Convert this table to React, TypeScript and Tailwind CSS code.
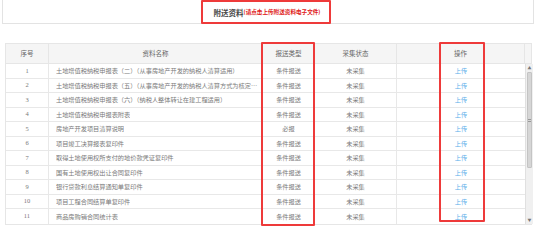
const rows = [
  { name: '土地增值税纳税申报表（二）（从事房地产开发的纳税人清算适用）', type: '条件报送' },
  { name: '土地增值税纳税申报表（五）（从事房地产开发的纳税人清算方式为核定征收适用）', type: '条件报送' },
  { name: '土地增值税纳税申报表（六）（纳税人整体转让在建工程适用）', type: '条件报送' },
  { name: '土地增值税纳税申报表附表', type: '条件报送' },
  { name: '房地产开发项目清算说明', type: '必报' },
  { name: '项目竣工决算报表复印件', type: '条件报送' },
  { name: '取得土地使用权所支付的地价款凭证复印件', type: '条件报送' },
  { name: '国有土地使用权出让合同复印件', type: '条件报送' },
  { name: '银行贷款利息结算通知单复印件', type: '条件报送' },
  { name: '项目工程合同结算单复印件', type: '条件报送' },
  { name: '商品房购销合同统计表', type: '条件报送' },
];

const font = { fontFamily: '"Noto Sans CJK SC", "Liberation Sans", sans-serif' };

export default function App() {
  return (
    <div className="relative h-[240px] w-[554px] overflow-hidden bg-white" style={font}>
      {/* title panel */}
      <div className="ml-[2px] flex h-[24px] w-[532px] justify-center border-x border-b border-[#e3e3e3]">
        <div className="flex w-[130px] items-center justify-center pt-[2px] pr-[2px] font-bold">
          <span className="text-[7.5px] text-[#444]">附送资料</span>
          <span className="text-[5.6px] text-[#e02020]">(请点击上传附送资料电子文件)</span>
        </div>
      </div>

      {/* table */}
      <div className="ml-[5px] mt-[19px] w-[527px] border border-[#e6e6e6] text-[6.2px] text-[#7a7a7a]">
        <div className="grid h-[20px] grid-cols-[43px_214px_52px_82px_128px_1fr] items-center border-b border-[#e6e6e6] bg-[#f5f5f5] text-[6.5px] text-[#666]">
          <div className="flex h-full items-center justify-center border-r border-[#e6e6e6]">序号</div>
          <div className="flex h-full items-center justify-center border-r border-[#e6e6e6]">资料名称</div>
          <div className="flex h-full items-center justify-center border-r border-[#e6e6e6]">报送类型</div>
          <div className="flex h-full items-center justify-center border-r border-[#e6e6e6]">采集状态</div>
          <div className="flex h-full items-center justify-center border-r border-[#e6e6e6]">操作</div>
          <div />
        </div>
        <div className="flex">
          <div className="w-[519px]">
            {rows.map((r, i) => (
              <div
                key={i}
                className="grid h-[14.5px] grid-cols-[43px_214px_52px_82px_128px] border-b border-[#e8e8e8] last:border-b-0"
              >
                <div
                  className="flex items-center justify-center border-r border-[#e8e8e8]"
                  style={{ fontFamily: '"Liberation Serif", serif', fontSize: '6.5px' }}
                >
                  {i + 1}
                </div>
                <div className="flex min-w-0 items-center border-r border-[#e8e8e8] pl-[7px] pr-[4px]">
                  <span className="block min-w-0 truncate">{r.name}</span>
                </div>
                <div className="flex items-center justify-center border-r border-[#e8e8e8]">{r.type}</div>
                <div className="flex items-center justify-center border-r border-[#e8e8e8]">未采集</div>
                <div className="flex items-center justify-center text-[#5aaeea]">上传</div>
              </div>
            ))}
          </div>
          {/* scrollbar */}
          <div className="flex w-[8px] flex-col border-l border-[#e0e0e0] bg-[#f0f0f0]">
            <div className="flex h-[8px] items-center justify-center text-[4px] leading-none text-[#777]">▲</div>
            <div className="mx-[1px] flex h-[96px] items-center justify-center rounded-[1px] border border-[#c4c4c4] bg-[#d6d6d6]">
              <div className="h-[3px] w-[3px] border-y border-[#999]" />
            </div>
            <div className="flex-1" />
            <div className="flex h-[8px] items-center justify-center text-[4px] leading-none text-[#777]">▼</div>
          </div>
        </div>
      </div>

      {/* red highlight boxes */}
      <div className="absolute left-[201px] top-0 h-[24px] w-[130px] rounded-[1px] border-2 border-[#ee3a3a]" />
      <div className="absolute left-[261px] top-[42px] h-[184px] w-[54px] rounded-[1px] border-2 border-[#ee3a3a]" />
      <div className="absolute left-[439px] top-[42px] h-[180px] w-[46px] rounded-[1px] border-2 border-[#ee3a3a]" />
    </div>
  );
}
